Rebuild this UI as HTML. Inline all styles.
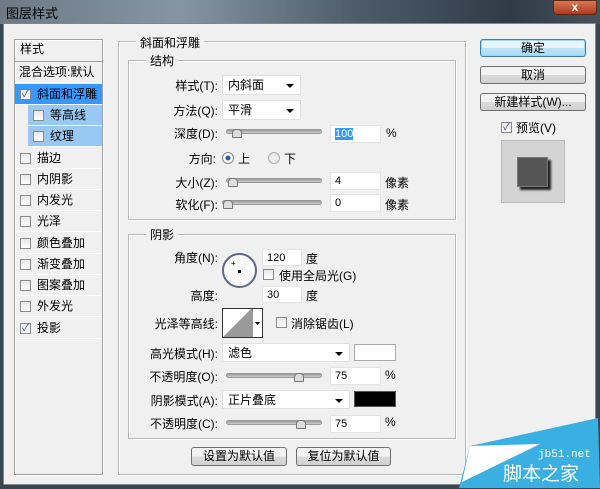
<!DOCTYPE html><html><head><meta charset="utf-8"><style>
*{box-sizing:border-box;margin:0;padding:0}
body{width:600px;height:489px;overflow:hidden;background:#3a4550;font-family:"Liberation Sans","Noto Sans CJK SC",sans-serif;font-size:12px;color:#000;position:relative}
.a{position:absolute}
.title{left:0;top:0;width:600px;height:24px;background:linear-gradient(90deg,#6d7a86,#8595a3 30%,#4d5b68 60%,#2f3b47 85%,#47525c);}
.client{left:3px;top:23px;width:593px;height:462px;background:#f0f0f0;border:1px solid #7a8894}
.lbox{border:1px solid #a0a0a0;box-shadow:inset 1px 1px 0 #fff,1px 1px 0 #fff}
.item{position:absolute;left:15px;width:87px;height:21px;border-bottom:1px solid #fff;line-height:20px;padding-left:22px;font-size:12px}
.cb{position:absolute;width:11px;height:11px;border:1px solid #8a8a8a;background:linear-gradient(#e8e8e8,#fff);font-size:10px;line-height:9px;text-align:center;color:#2a4d9c}
.item .cb{left:5px;top:5px}
.grp{position:absolute;border:1px solid #b8b8b8;box-shadow:1px 1px 0 #fff inset,1px 1px 0 #fff}
.gt{position:absolute;background:#f0f0f0;padding:0 4px;font-size:12px}
.lbl{position:absolute;text-align:right;width:100px;font-size:12px}
.dd{position:absolute;background:#fff;border:1px solid #e0e0e0;padding-left:5px;line-height:18px}
.dd:after{content:"";position:absolute;right:6px;top:8px;border:4px solid transparent;border-top:4px solid #000;border-bottom:0}
.inp{position:absolute;background:#fff;border:1px solid #e4e4e4;padding-left:4px;line-height:16px;font-size:11px;width:51px;height:18px}
.sl{position:absolute;height:5px;width:96px;border-radius:3px;background:linear-gradient(#999,#ccc);border:1px solid #999}
.th{position:absolute;width:10px;height:9px;top:-1px;background:#ddd;border:1px solid #777;border-radius:4px 4px 1px 1px}
.btn{position:absolute;border:1px solid #707070;border-radius:3px;background:linear-gradient(#f2f2f2 50%,#dcdcdc 50%,#d0d0d0);text-align:center;line-height:16px;font-size:12px}
</style></head><body>
<div class="a title"></div>
<div class="a" style="left:6px;top:3px;color:#000;font-size:13px">图层样式</div>
<div class="a" style="left:553px;top:0;width:44px;height:15px;background:linear-gradient(#d87a5a,#b03818);border:1px solid #5a2a1a;border-radius:0 0 4px 4px;color:#fff;text-align:center;font-weight:bold;line-height:13px">x</div>
<div class="a client"></div>

<div class="a lbox" style="left:14px;top:39px;width:89px;height:436px"></div>
<div class="item" style="top:39px;padding-left:5px;height:23px;border-bottom:1px solid #a0a0a0">样式</div>
<div class="item" style="top:62px;padding-left:4px">混合选项:默认</div>
<div class="item" style="top:84px;background:#3399ff;color:#000"><span class="cb">✓</span>斜面和浮雕</div>
<div class="item" style="top:105px;left:28px;width:74px;background:#99c8f4"><span class="cb">&nbsp;</span>等高线</div>
<div class="item" style="top:126px;left:28px;width:74px;background:#99c8f4"><span class="cb">&nbsp;</span>纹理</div>
<div class="item" style="top:148px"><span class="cb"></span>描边</div>
<div class="item" style="top:169px"><span class="cb"></span>内阴影</div>
<div class="item" style="top:190px"><span class="cb"></span>内发光</div>
<div class="item" style="top:211px"><span class="cb"></span>光泽</div>
<div class="item" style="top:233px"><span class="cb"></span>颜色叠加</div>
<div class="item" style="top:254px"><span class="cb"></span>渐变叠加</div>
<div class="item" style="top:275px"><span class="cb"></span>图案叠加</div>
<div class="item" style="top:296px"><span class="cb"></span>外发光</div>
<div class="item" style="top:318px"><span class="cb">✓</span>投影</div>

<div class="grp" style="left:118px;top:41px;width:348px;height:434px"></div>
<div class="gt" style="left:136px;top:34px">斜面和浮雕</div>
<div class="grp" style="left:128px;top:60px;width:328px;height:160px"></div>
<div class="gt" style="left:146px;top:52px">结构</div>

<div class="lbl" style="left:118px;top:77px">样式(T):</div>
<div class="dd" style="left:222px;top:75px;width:79px;height:20px">内斜面</div>
<div class="lbl" style="left:118px;top:102px">方法(Q):</div>
<div class="dd" style="left:222px;top:100px;width:79px;height:20px">平滑</div>
<div class="lbl" style="left:118px;top:125px">深度(D):</div>
<div class="sl" style="left:226px;top:129px"><div class="th" style="left:5px"></div></div>
<div class="inp" style="left:330px;top:125px"><span style="background:#3399ff;color:#fff">100</span></div>
<div class="a" style="left:386px;top:126px">%</div>
<div class="lbl" style="left:116px;top:150px">方向:</div>
<div class="a" style="left:222px;top:152px;width:12px;height:12px;border-radius:50%;border:1px solid #888;background:radial-gradient(#1a5fb0 30%,#fff 40%)"></div>
<div class="a" style="left:238px;top:150px">上</div>
<div class="a" style="left:268px;top:152px;width:12px;height:12px;border-radius:50%;border:1px solid #aaa;background:#eee"></div>
<div class="a" style="left:284px;top:150px">下</div>
<div class="lbl" style="left:118px;top:174px">大小(Z):</div>
<div class="sl" style="left:226px;top:178px"><div class="th" style="left:1px"></div></div>
<div class="inp" style="left:330px;top:172px">4</div>
<div class="a" style="left:385px;top:174px">像素</div>
<div class="lbl" style="left:118px;top:196px">软化(F):</div>
<div class="sl" style="left:222px;top:200px;width:100px"><div class="th" style="left:0"></div></div>
<div class="inp" style="left:330px;top:194px">0</div>
<div class="a" style="left:385px;top:196px">像素</div>

<div class="grp" style="left:128px;top:234px;width:328px;height:205px"></div>
<div class="gt" style="left:146px;top:226px">阴影</div>
<div class="lbl" style="left:118px;top:249px">角度(N):</div>
<div class="a" style="left:222px;top:253px;width:35px;height:35px;border-radius:50%;border:2px solid #5a6a8a;background:#fafafa"></div>
<div class="a" style="left:238px;top:270px;width:3px;height:3px;background:#000"></div>
<div class="a" style="left:231px;top:259px;font-size:8px">+</div>
<div class="inp" style="left:262px;top:249px;width:40px;height:17px">120</div>
<div class="a" style="left:306px;top:250px">度</div>
<span class="cb" style="left:263px;top:269px"></span>
<div class="a" style="left:279px;top:267px">使用全局光(G)</div>
<div class="lbl" style="left:118px;top:287px">高度:</div>
<div class="inp" style="left:262px;top:286px;width:40px;height:17px">30</div>
<div class="a" style="left:306px;top:287px">度</div>
<div class="lbl" style="left:118px;top:315px">光泽等高线:</div>
<svg class="a" style="left:222px;top:308px" width="41" height="30"><rect x="0.5" y="0.5" width="40" height="29" fill="#fff" stroke="#333"/><polygon points="1,29 29,1 29,29" fill="#999"/><line x1="30" y1="0" x2="30" y2="30" stroke="#333"/><polygon points="33,14 38,14 35.5,17" fill="#000"/></svg>
<span class="cb" style="left:276px;top:317px"></span>
<div class="a" style="left:291px;top:315px">消除锯齿(L)</div>
<div class="lbl" style="left:118px;top:345px">高光模式(H):</div>
<div class="dd" style="left:222px;top:343px;width:128px;height:19px">滤色</div>
<div class="a" style="left:354px;top:344px;width:42px;height:17px;background:#fff;border:1px solid #aaa"></div>
<div class="lbl" style="left:118px;top:368px">不透明度(O):</div>
<div class="sl" style="left:226px;top:373px"><div class="th" style="left:67px"></div></div>
<div class="inp" style="left:330px;top:367px">75</div>
<div class="a" style="left:385px;top:368px">%</div>
<div class="lbl" style="left:118px;top:392px">阴影模式(A):</div>
<div class="dd" style="left:222px;top:390px;width:128px;height:19px">正片叠底</div>
<div class="a" style="left:354px;top:391px;width:42px;height:16px;background:#000;border:1px solid #555"></div>
<div class="lbl" style="left:118px;top:415px">不透明度(C):</div>
<div class="sl" style="left:226px;top:420px"><div class="th" style="left:69px"></div></div>
<div class="inp" style="left:330px;top:415px">75</div>
<div class="a" style="left:385px;top:415px">%</div>

<div class="btn" style="left:191px;top:447px;width:96px;height:19px">设置为默认值</div>
<div class="btn" style="left:296px;top:447px;width:95px;height:19px">复位为默认值</div>

<div class="btn" style="left:480px;top:39px;width:106px;height:18px;border-color:#3c7fb1;background:linear-gradient(#e8f5fc 50%,#bfe4f8 50%,#a7d9f5);box-shadow:0 0 0 1px #9cd7f7 inset">确定</div>
<div class="btn" style="left:480px;top:66px;width:106px;height:18px">取消</div>
<div class="btn" style="left:480px;top:93px;width:106px;height:18px">新建样式(W)...</div>
<span class="cb" style="left:501px;top:122px">✓</span>
<div class="a" style="left:516px;top:119px">预览(V)</div>
<div class="a" style="left:501px;top:140px;width:64px;height:63px;background:#d4d4d4;border:1px solid #bbb"></div>
<div class="a" style="left:517px;top:157px;width:31px;height:30px;background:#555;box-shadow:3px 3px 2px #222;border:1px solid #777"></div>

<svg class="a" style="left:0;top:0" width="600" height="489"><polygon points="598,418 470,446 459,488 600,488" fill="#3ab0e2"/><polygon points="470,446 540,444 462,482" fill="#fff"/></svg>
<div class="a" style="left:538px;top:449px;color:#fff;font-family:'Liberation Mono',monospace;font-size:11px">jb51.net</div>
<div class="a" style="left:503px;top:464px;color:#fff;font-size:19px;line-height:22px;font-family:'WenQuanYi Zen Hei',sans-serif">脚本之家</div>
</body></html>
